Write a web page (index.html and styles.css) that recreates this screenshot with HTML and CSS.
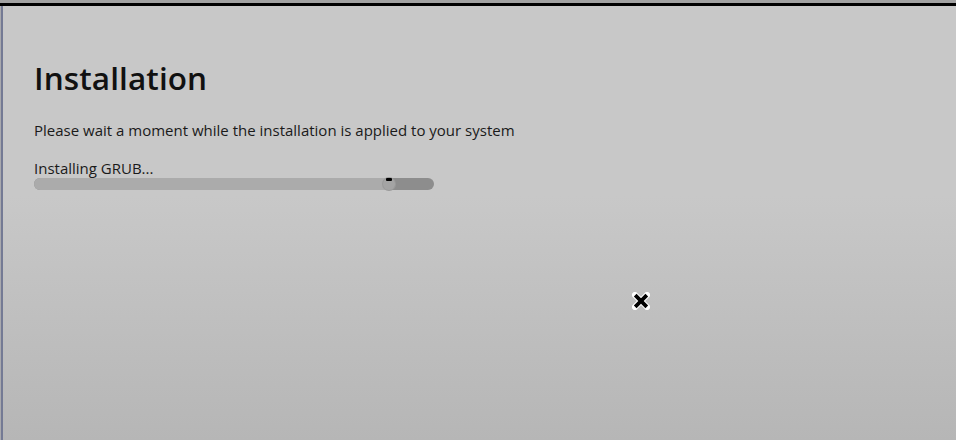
FILE: index.html
```html
<!DOCTYPE html>
<html>
<head>
<meta charset="utf-8">
<link rel="stylesheet" href="styles.css">
</head>
<body>
<div class="frame">
  <div class="topbar"></div>
  <div class="window">
    <div class="edge"></div>
    <main class="page">
      <h1 class="title">Installation</h1>
      <p class="desc">Please wait a moment while the installation is applied to your system</p>
      <div class="status">Installing GRUB...</div>
      <div class="progress">
        <div class="fill" style="width: 355px"></div>
        <div class="knob"><span class="dash"></span></div>
      </div>
    </main>
    <div class="cursor">
      <svg width="18" height="18" viewBox="0 0 18 18">
        <path d="M3 3 L15 15 M15 3 L3 15" stroke="#fff" stroke-width="6" stroke-linecap="square"/>
        <path d="M3.2 3.2 L14.8 14.8 M14.8 3.2 L3.2 14.8" stroke="#000" stroke-width="3.8" stroke-linecap="butt"/>
      </svg>
    </div>
  </div>
</div>
</body>
</html>
```
FILE: styles.css
```css
html, body {
  margin: 0;
  padding: 0;
  width: 956px;
  height: 440px;
  overflow: hidden;
}
.frame {
  width: 956px;
  height: 440px;
  display: flex;
  flex-direction: column;
}
.topbar {
  height: 3px;
  background: #a2a2a2;
  border-bottom: 3px solid #000;
  flex: none;
}
.window {
  flex: 1;
  display: flex;
  position: relative;
  background: linear-gradient(to bottom, #c8c8c8 0px, #c8c8c8 190px, #b6b6b6 434px);
}
.edge {
  width: 1px;
  background: #a9a9ad;
  border-right: 2px solid #747a94;
  flex: none;
}
.page {
  padding-left: 31px;
  font-family: "Open Sans", "DejaVu Sans", sans-serif;
  color: #1a1a1a;
}
.title {
  margin: 54px 0 0 0;
  font-size: 31.5px;
  font-weight: 600;
  line-height: 36px;
  letter-spacing: 0.1px;
  color: #111;
}
.desc {
  margin: 24px 0 0 0;
  font-size: 15px;
  line-height: 20px;
}
.status {
  margin-top: 18px;
  font-size: 15px;
  line-height: 20px;
}
.progress {
  position: relative;
  margin-top: 0;
  width: 400px;
  height: 12px;
  border-radius: 6px;
  background: #8d8d8d;
}
.fill {
  height: 12px;
  border-radius: 6px 0 0 6px;
  background: #ababab;
}
.knob {
  position: absolute;
  left: 349px;
  top: 0;
  width: 12px;
  height: 12px;
  border-radius: 50%;
  background: #a4a4a4;
  box-shadow: 0 0 0 1px #9a9a9a;
}
.dash {
  position: absolute;
  left: 3px;
  top: 0;
  width: 6px;
  height: 3px;
  border-radius: 1px;
  background: #000;
}
.cursor {
  position: absolute;
  left: 632px;
  top: 286px;
  width: 18px;
  height: 18px;
}
.cursor svg { display: block; }
```
